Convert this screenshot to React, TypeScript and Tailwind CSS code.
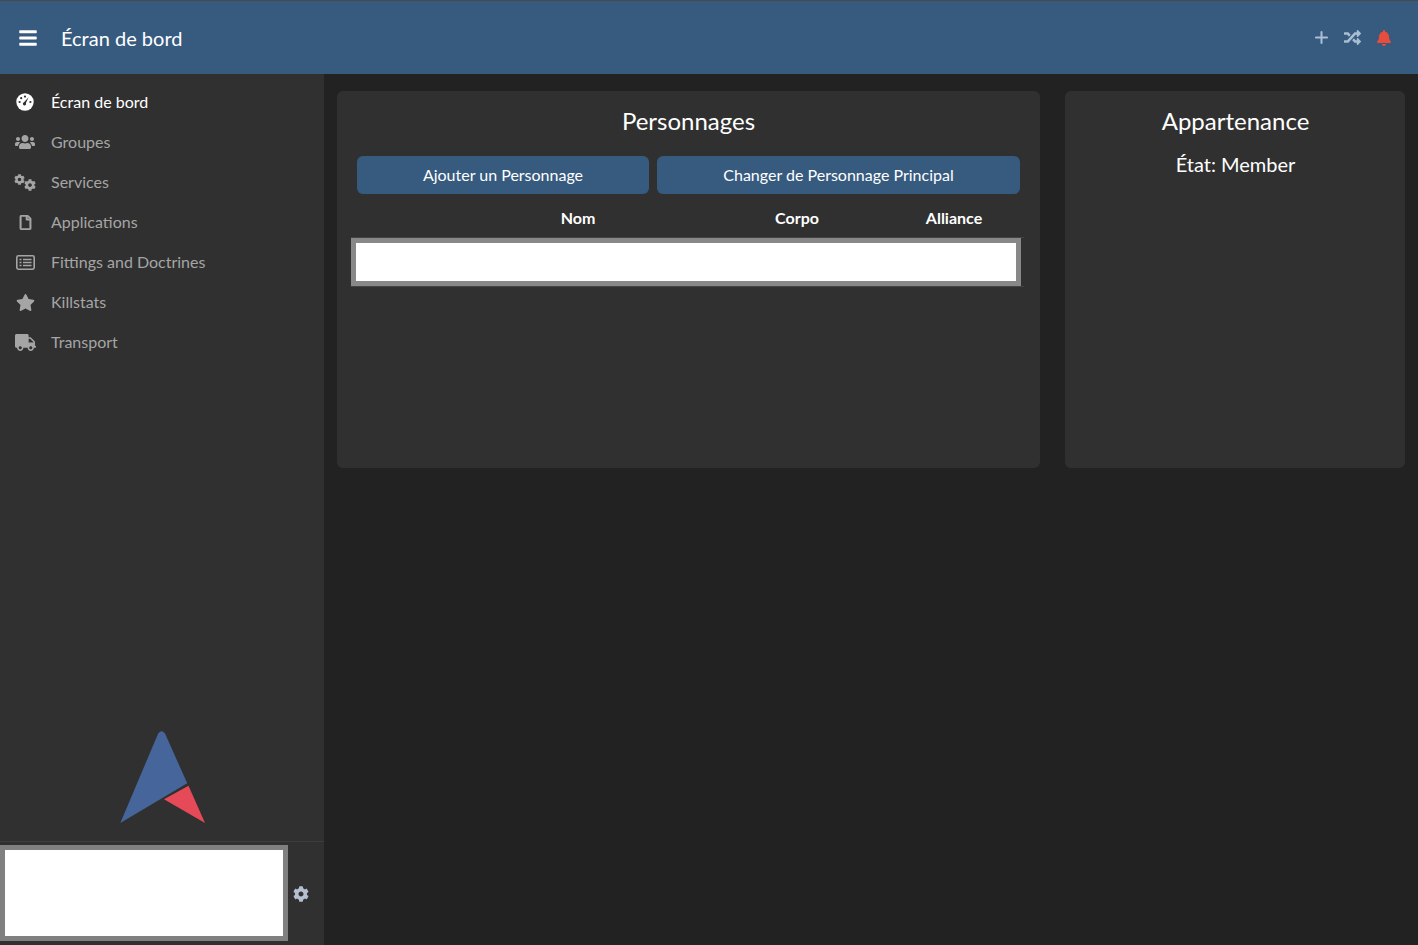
import React from "react";
import { FaBars, FaUsers, FaCog, FaRegFile, FaStar, FaTruck, FaRandom, FaBell } from "react-icons/fa";
import { Plus } from "lucide-react";

const GaugeIcon = () => (
  <svg width="18" height="18" viewBox="0 0 18 18" aria-hidden="true">
    <circle cx="9" cy="9" r="8.7" fill="currentColor" />
    <g fill="#303030">
      <circle cx="9" cy="3.6" r="1.1" />
      <circle cx="5.2" cy="5.2" r="1.1" />
      <circle cx="3.6" cy="9" r="1.1" />
      <circle cx="14.4" cy="9" r="1.1" />
    </g>
    <path d="M12.6 4.2 L9.9 10 A1.6 1.6 0 1 1 8 9.3 Z" fill="#303030" />
  </svg>
);

const GearsIcon = () => (
  <span className="flex h-[17px] items-start">
    <FaCog size={11} />
    <FaCog size={12} className="-ml-[1px] mt-[5px]" />
  </span>
);

const ListIcon = () => (
  <svg width="19" height="15" viewBox="0 0 19 15" fill="none" stroke="currentColor" strokeWidth="1.6" aria-hidden="true">
    <rect x="0.8" y="0.8" width="17.4" height="13.4" rx="1.6" />
    <path d="M3.5 4.5h2M3.5 7.5h2M3.5 10.5h2M7 4.5h8.5M7 7.5h8.5M7 10.5h8.5" strokeWidth="1.7" />
  </svg>
);

const nav = [
  { label: "Écran de bord", icon: <GaugeIcon />, active: true },
  { label: "Groupes", icon: <FaUsers size={20} /> },
  { label: "Services", icon: <GearsIcon /> },
  { label: "Applications", icon: <FaRegFile size={15} className="stroke-[20px]" /> },
  { label: "Fittings and Doctrines", icon: <ListIcon /> },
  { label: "Killstats", icon: <FaStar size={19} /> },
  { label: "Transport", icon: <FaTruck size={21} /> },
];

export default function App() {
  return (
    <div className="flex h-[945px] w-[1418px] flex-col overflow-hidden bg-[#222222] font-['Lato','Noto_Sans',sans-serif] text-base text-white">
      <header className="flex h-[74px] shrink-0 items-center border-t border-t-[#4a4a4a] bg-[#375a7f] pl-[18px] pr-[26px]">
        <FaBars size={20} className="text-white" />
        <h1 className="ml-[23px] text-xl font-normal">Écran de bord</h1>
        <div className="ml-auto flex items-center">
          <Plus size={19} strokeWidth={2.6} className="text-[#a9bdd3]" />
          <FaRandom size={17} className="ml-[13px] text-[#a9bdd3]" />
          <FaBell size={16} className="ml-[15px] text-[#e74c3c]" />
        </div>
      </header>

      <div className="flex min-h-0 flex-1">
        <aside className="flex w-[324px] shrink-0 flex-col bg-[#303030]">
          <nav className="flex flex-col pt-2">
            {nav.map(({ label, icon, active }) => (
              <div key={label} className={`flex h-10 items-center ${active ? "text-white" : "text-[#a5a5a5]"}`}>
                <span className="flex w-[51px] justify-center pr-[1px]">{icon}</span>
                <span>{label}</span>
              </div>
            ))}
          </nav>
          <div className="mt-auto flex justify-center pb-[17px] pl-[2px]">
            <svg width="86" height="93" viewBox="0 0 86 93" aria-label="Logo">
              <path d="M0.3 92 L38.2 2.4 Q41.5 -1.8 45 2.4 L67.2 52.3 Z" fill="#46659a" />
              <path d="M68.5 54.7 L85 92 L44 68.3 Z" fill="#e64a58" />
            </svg>
          </div>
          <div className="flex h-[104px] shrink-0 items-center border-t border-t-[#3d3d3d] pb-[2px]">
            <div className="h-[96px] w-[288px] border-[5px] border-[#808080] bg-white" />
            <FaCog size={16} className="ml-[5px] mt-[2px] text-[#b4c0cf]" />
          </div>
        </aside>

        <main className="flex flex-1 items-start gap-[25px] pl-[13px] pr-[13px] pt-[17px]">
          <section className="h-[377px] w-[703px] rounded-md bg-[#303030] pl-[14px] pr-[16px]">
            <h2 className="mt-[13px] pl-[2px] text-center text-2xl leading-[34px]">Personnages</h2>
            <div className="mt-[18px] flex gap-2 pl-[6px] pr-[3px]">
              <button className="h-[38px] w-[292px] rounded-md bg-[#375a7f] text-center">Ajouter un Personnage</button>
              <button className="h-[38px] w-[363px] rounded-md bg-[#375a7f] text-center">Changer de Personnage Principal</button>
            </div>
            <div className="mt-[9px] grid h-[30px] grid-cols-[95px_264px_174px_140px] items-center pb-[1px] text-center font-bold">
              <span />
              <span>Nom</span>
              <span>Corpo</span>
              <span>Alliance</span>
            </div>
            <div className="mt-[4px] w-[673px] border-y border-y-[#444444]">
              <div className="h-[48px] w-[670px] border-[5px] border-[#888888] bg-white" />
            </div>
          </section>
          <section className="h-[377px] w-[340px] rounded-md bg-[#303030] text-center">
            <h2 className="mt-[13px] pl-[1px] text-2xl leading-[34px]">Appartenance</h2>
            <p className="mt-[12px] pl-[1px] text-xl leading-7">État: Member</p>
          </section>
        </main>
      </div>
    </div>
  );
}
